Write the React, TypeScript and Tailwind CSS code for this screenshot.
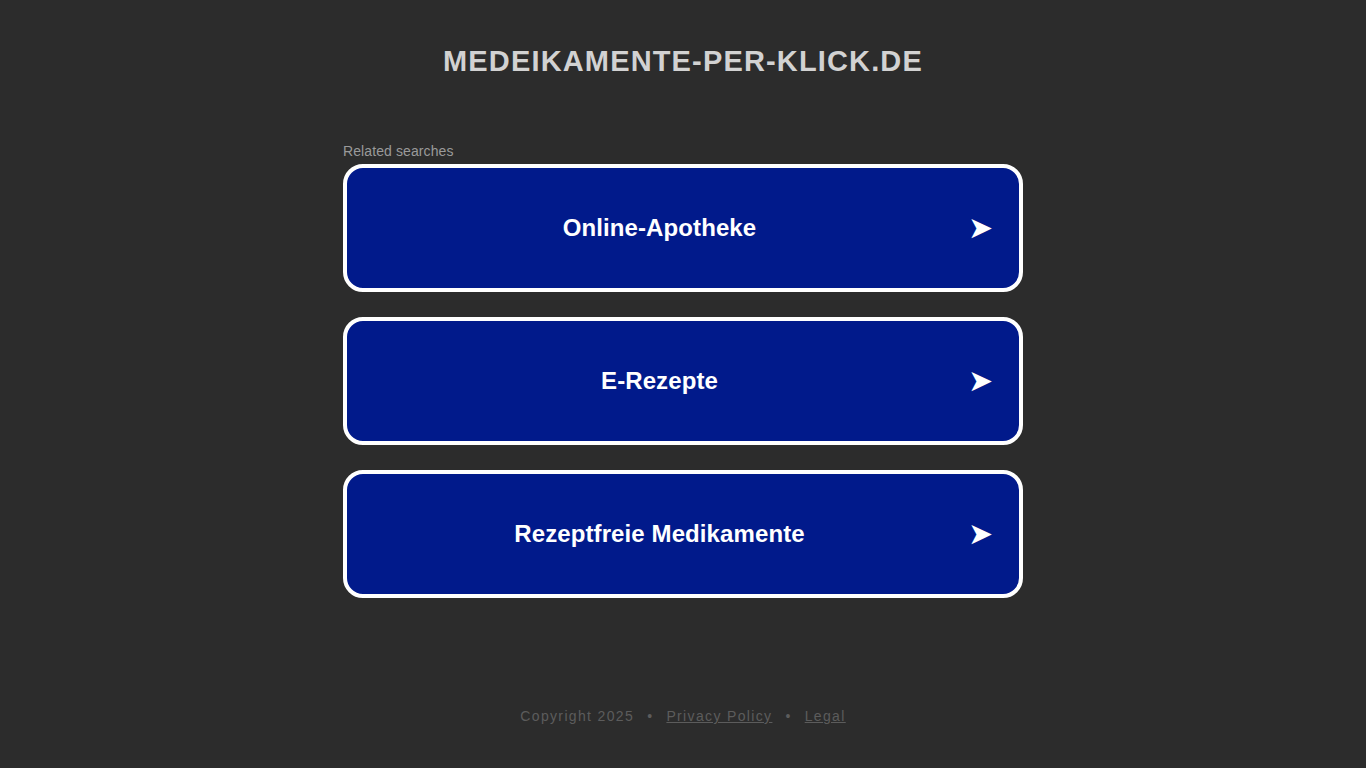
import React from "react";

const items = ["Online-Apotheke", "E-Rezepte", "Rezeptfreie Medikamente"];

export default function App() {
  return (
    <div className="min-h-[768px] w-full bg-[#2c2c2c] flex flex-col items-center" style={{ fontFamily: '"Liberation Sans", Arial, sans-serif' }}>
      <h1 className="mt-[43px] text-[29px] leading-[36px] font-bold tracking-[1.15px] text-[#d2d2d2]">MEDEIKAMENTE-PER-KLICK.DE</h1>
      <div className="mt-[64px] w-[680px] flex flex-col">
        <div className="text-[14px] leading-[16px] tracking-[0.1px] text-[#9a9a9a] mb-[5px]">Related searches</div>
        <div className="flex flex-col gap-[25px]">
          {items.map((t) => (
            <a key={t} href="#" className="h-[128px] rounded-[20px] border-4 border-white bg-[#011a8b] flex items-center text-white">
              <span className="flex-1 text-center text-[24px] font-bold leading-[28px] tracking-[0.1px]">{t}</span>
              <span className="w-[24px] -ml-[4px] mr-[27px] text-[30px] leading-[28px]">➤</span>
            </a>
          ))}
        </div>
      </div>
      <div className="mt-[108px] text-[14px] tracking-[1.35px] text-[#5c5c5c] flex gap-[13px]">
        <span>Copyright 2025</span>
        <span>•</span>
        <a href="#" className="underline">Privacy Policy</a>
        <span>•</span>
        <a href="#" className="underline">Legal</a>
      </div>
    </div>
  );
}
